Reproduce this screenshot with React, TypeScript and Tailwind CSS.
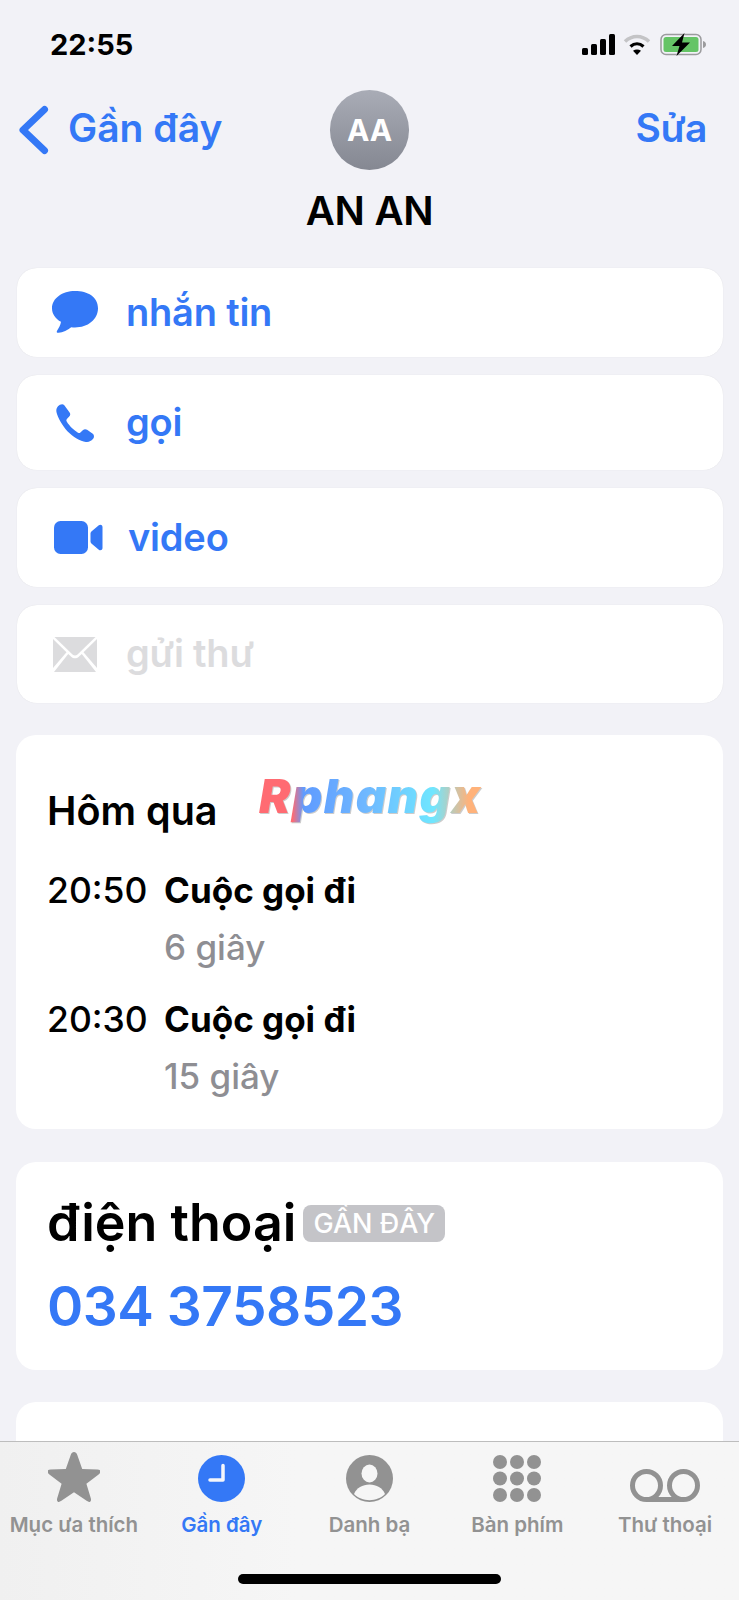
import React from "react";

const font = { fontFamily: "Inter, 'Noto Sans', sans-serif" };

const actions = [
  { label: "nhắn tin", height: "h-[89px]", icon: "message", iconBox: "w-[109px] pl-[35px]" },
  { label: "gọi", height: "h-[95px]", icon: "phone", iconBox: "w-[109px] pl-[39px]" },
  { label: "video", height: "h-[99px]", icon: "video", iconBox: "w-[111px] pl-[37px]" },
  { label: "gửi thư", height: "h-[98px]", icon: "mail", iconBox: "w-[109px] pl-[36px]", disabled: true },
];

const ActionIcon = ({ name }: { name: string }) => {
  if (name === "message") {
    return (
      <svg width="46" height="43" viewBox="0 0 46 43" fill="currentColor">
        <path d="M23 0C10.3 0 0 7.4 0 17.2c0 5.800 3.600 10.600 9 13.600-.5 3.200-2.200 6.600-3.800 8.600-1 1.300-.4 2.600 1.400 2.400 4.200-.4 9.200-2.600 12.600-5.600 1.200.1 2.500.2 3.800.2 12.700 0 23-7.800 23-19.200S35.700 0 23 0z" />
      </svg>
    );
  }
  if (name === "phone") {
    return (
      <svg width="38" height="38" viewBox="0 0 38 38" fill="currentColor">
        <path d="M2 2.200C3.700.6 6.600-.5 8.300 1.200l5.300 7.200c1 1.400.8 3-.4 4.200l-2.300 2.500c-.7.800-.7 1.500-.2 2.400 1.300 2.200 3.200 4.500 5.200 6.500 2 1.900 4 3.500 6.100 4.700.9.500 1.600.5 2.400-.2l2.400-2.300c1.300-1.200 2.900-1.400 4.300-.4l5.300 3.700c2 1.400 2 3.900.5 5.600-1.700 2-4.100 3.200-7 2.800-5.900-.8-12.700-4.900-18.500-10.700C6.300 21.100 1.600 13.500.5 8.200 0 5.800.6 3.600 2 2.200z" />
      </svg>
    );
  }
  if (name === "video") {
    return (
      <svg width="49" height="33" viewBox="0 0 49 33" fill="currentColor">
        <rect x="0" y="0" width="34" height="33" rx="6.500" />
        <path d="M36.500 12.500c0-.8.300-1.500.9-2l7.400-6.300c1.500-1.200 3.700-.3 3.700 1.700v21.200c0 2-2.200 2.900-3.700 1.700l-7.400-6.300c-.6-.5-.9-1.200-.9-2z" />
      </svg>
    );
  }
  return (
    <svg width="44" height="35" viewBox="0 0 44 35" fill="currentColor">
      <path d="M1.500 0h41L24.500 17.500c-1.500 1.400-3.500 1.400-5 0z" />
      <path d="M0 2l13.500 13.200L0 31z" />
      <path d="M44 2L30.500 15.200 44 31z" />
      <path d="M15.200 17l3 2.800c2.200 2 5.400 2 7.600 0l3-2.800L43 35H1z" />
    </svg>
  );
};

const tabs = [
  { label: "Mục ưa thích", icon: "star" },
  { label: "Gần đây", icon: "clock", active: true },
  { label: "Danh bạ", icon: "person" },
  { label: "Bàn phím", icon: "keypad" },
  { label: "Thư thoại", icon: "voicemail" },
];

const TabIcon = ({ name }: { name: string }) => {
  if (name === "star") {
    return (
      <svg width="52" height="50" viewBox="0 0 52 50" fill="currentColor">
        <path d="M26 0c1.500 0 2.500 1 3.200 2.800l5 14.300 15.200.4c2 0 3.200.8 3.200 1.900 0 1-.6 2-2 3L38.400 31.800l4.400 14.400c.5 1.800.2 3-.7 3.500-.9.600-2 .2-3.500-.9L26 40.200l-12.600 8.600c-1.500 1.100-2.600 1.500-3.500.9-.9-.5-1.200-1.700-.7-3.500l4.400-14.400L1.400 22.400c-1.400-1-2-2-2-3 0-1.100 1.200-1.900 3.200-1.900l15.200-.4 5-14.300C23.500 1 24.500 0 26 0z" />
      </svg>
    );
  }
  if (name === "clock") {
    return (
      <svg width="47" height="47" viewBox="0 0 47 47">
        <circle cx="23.500" cy="23.500" r="23.500" fill="currentColor" />
        <path d="M25 10.500v14.500H12" fill="none" stroke="#f4f6fb" strokeWidth="3.500" strokeLinecap="round" strokeLinejoin="round" />
      </svg>
    );
  }
  if (name === "person") {
    return (
      <svg width="47" height="47" viewBox="0 0 47 47">
        <circle cx="23.500" cy="23.500" r="23.500" fill="currentColor" />
        <ellipse cx="23.500" cy="18.500" rx="8" ry="9" fill="#f6f6f6" />
        <path d="M8 39c2.500-6 8.500-9.500 15.500-9.500S36.500 33 39 39c-4 4-9.500 6.200-15.500 6.200S12 43 8 39z" fill="#f6f6f6" />
      </svg>
    );
  }
  if (name === "keypad") {
    return (
      <svg width="48" height="47" viewBox="0 0 48 47" fill="currentColor">
        {[7, 24, 41].map((cx) =>
          [7, 23.500, 40].map((cy) => <circle key={`${cx}-${cy}`} cx={cx} cy={cy} r="7" />),
        )}
      </svg>
    );
  }
  return (
    <svg width="70" height="33" viewBox="0 0 70 33" fill="none" stroke="currentColor" strokeWidth="5">
      <circle cx="16.500" cy="16.500" r="14" />
      <circle cx="53.500" cy="16.500" r="14" />
      <path d="M16.500 30.500h37" />
    </svg>
  );
};

const StatusIcons = () => (
  <div className="flex items-center gap-[7px]">
    <svg width="34" height="21" viewBox="0 0 34 21" fill="black">
      <rect x="0" y="14" width="6" height="7" rx="1.500" />
      <rect x="9" y="10" width="6" height="11" rx="1.500" />
      <rect x="18" y="5" width="6" height="16" rx="1.500" />
      <rect x="27" y="0" width="6" height="21" rx="1.500" />
    </svg>
    <svg width="28" height="21" viewBox="0 0 28 21" fill="none" strokeLinecap="butt">
      <path d="M2 7.500C9 .8 19 .8 26 7.500" stroke="#c4c4c6" strokeWidth="3.500" />
      <path d="M7.500 12.500c4-3.500 9-3.500 13 0" stroke="black" strokeWidth="3.200" />
      <path d="M14 21l-4-4.200c2.400-1.800 5.600-1.800 8 0z" fill="black" />
    </svg>
    <svg width="47" height="23" viewBox="0 0 47 23" className="ml-[2px]">
      <rect x="1" y="1.500" width="40" height="20" rx="5" fill="none" stroke="#9b9b9d" strokeWidth="1.500" />
      <rect x="3.500" y="4" width="35" height="15" rx="2.500" fill="#65c466" />
      <path d="M43 8v7c1.800-.5 3-1.800 3-3.500S44.800 8.500 43 8z" fill="#9b9b9d" />
      <path d="M24.500 0L12 13h7.500L16.500 23 30 9.500h-8z" fill="black" />
    </svg>
  </div>
);

export default function App() {
  return (
    <div style={font} className="relative h-[1600px] overflow-hidden bg-[#f2f2f7] text-black">
      {/* Status bar */}
      <div className="flex h-[88px] items-center justify-between pr-[32px] pl-[50px]">
        <span className="text-[29px] font-bold leading-none">22:55</span>
        <StatusIcons />
      </div>

      {/* Nav + contact */}
      <div className="relative flex h-[84px] items-center justify-between pr-[32px] pl-[18px]">
        <div className="flex items-center gap-[18px] text-[#3478f6]">
          <svg width="32" height="50" viewBox="0 0 32 50" fill="none" stroke="currentColor" strokeWidth="7" strokeLinecap="round" strokeLinejoin="round">
            <path d="M26.500 4.500L5 25l21.500 20.500" />
          </svg>
          <span className="-mt-[6px] text-[39px] font-semibold leading-none">Gần đây</span>
        </div>
        <div className="absolute top-[2px] left-[330px] flex h-[80px] w-[79px] items-center justify-center rounded-full bg-linear-to-b from-[#a9acb6] to-[#858892] text-[30px] font-bold text-white">
          AA
        </div>
        <span className="-mt-[6px] text-[39px] font-semibold leading-none tracking-[-0.5px] text-[#3478f6]">Sửa</span>
      </div>
      <div className="flex h-[64px] items-center justify-center pt-[14px] text-[40px] font-semibold leading-none tracking-[-0.3px]">AN AN</div>

      {/* Action buttons */}
      <div className="mx-[17px] mt-[32px] flex w-[706px] flex-col gap-[18px]">
        {actions.map((a) => (
          <div
            key={a.label}
            className={`flex ${a.height} items-center rounded-[20px] bg-white shadow-[0_0_1px_rgba(0,0,0,0.12)] ${a.disabled ? "text-[#dcdcde]" : "text-[#3478f6]"}`}
          >
            <div className={`flex shrink-0 ${a.iconBox}`}>
              <ActionIcon name={a.icon} />
            </div>
            <span className="-mt-[2px] text-[38px] font-semibold leading-none tracking-[-0.2px]">{a.label}</span>
          </div>
        ))}
      </div>

      {/* Call history */}
      <div className="relative mx-[16px] mt-[32px] h-[394px] rounded-[20px] bg-white pt-[50px] pl-[31px]">
        <div className="text-[39.500px] font-semibold leading-[52px]">Hôm qua</div>
        <span className="absolute top-[33px] left-[243px] bg-[linear-gradient(90deg,#ff6b72_0%,#ff6b72_15%,#5f9bff_20%,#6fb8ff_48%,#6fe6ff_78%,#ffb27a_94%)] bg-clip-text text-[47px] font-black italic leading-[56px] tracking-[1.5px] text-transparent drop-shadow-[1px_1px_0_rgba(0,0,0,0.2)]">
          Rphangx
        </span>
        <div className="mt-[25px] flex flex-col gap-[14.500px]">
          {[
            { time: "20:50", dur: "6 giây" },
            { time: "20:30", dur: "15 giây" },
          ].map((c) => (
            <div key={c.time} className="flex">
              <div className="w-[117px] text-[35.500px] font-medium leading-[57px]">{c.time}</div>
              <div>
                <div className="text-[35px] font-bold leading-[57px]">Cuộc gọi đi</div>
                <div className="text-[35px] font-medium leading-[57px] text-[#8e8e93]">{c.dur}</div>
              </div>
            </div>
          ))}
        </div>
      </div>

      {/* Phone */}
      <div className="mx-[16px] mt-[33px] h-[208px] rounded-[20px] bg-white pt-[31px] pl-[31px]">
        <div className="flex items-center gap-[7px]">
          <span className="text-[52px] font-semibold leading-[60px]">điện thoại</span>
          <span className="rounded-[8px] bg-[#c4c4c8] px-[10px] text-[27px] font-medium leading-[37px] text-white">GẦN ĐÂY</span>
        </div>
        <div className="mt-[23px] text-[55px] font-semibold leading-[60px] tracking-[-0.5px] text-[#3478f6]">034 3758523</div>
      </div>

      <div className="mx-[16px] mt-[32px] h-[200px] rounded-[20px] bg-white" />

      {/* Tab bar */}
      <div className="absolute right-0 bottom-0 left-0 h-[159px] border-t border-[#bdbdbd] bg-linear-to-r from-[#f0f0f0] via-[#f6f6f6] via-40% to-[#f6f6f6]">
        <div className="grid grid-cols-5">
          {tabs.map((t) => (
            <div key={t.label} className={`flex flex-col items-center ${t.active ? "text-[#3478f6]" : "text-[#929292]"}`}>
              <div className="flex h-[60px] items-end">
                <TabIcon name={t.icon} />
              </div>
              <span className="mt-[10px] text-[20.500px] font-semibold leading-[26px] whitespace-nowrap">{t.label}</span>
            </div>
          ))}
        </div>
        <div className="absolute bottom-[16px] left-[238px] h-[10px] w-[263px] rounded-full bg-black" />
      </div>
    </div>
  );
}
